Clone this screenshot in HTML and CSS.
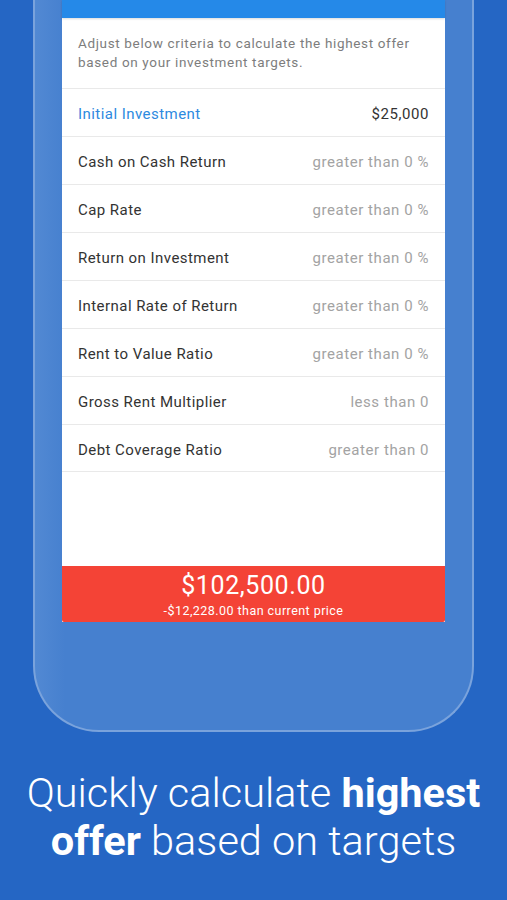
FILE: index.html
```html
<!DOCTYPE html>
<html lang="en">
<head>
  <meta charset="UTF-8" />
  <meta name="viewport" content="width=device-width, initial-scale=1.0"/>
  <title>Highest Offer</title>
  <link rel="stylesheet" href="styles.css">
</head>
<body>
  <div class="phone">
    <div class="screen">
      <div class="topbar"></div>
      <div class="content">
        <p class="intro">Adjust below criteria to calculate the highest offer based on your investment targets.</p>
        <div class="row">
          <span class="label blue">Initial Investment</span>
          <span class="value dark">$25,000</span>
        </div>
        <div class="row">
          <span class="label">Cash on Cash Return</span>
          <span class="value">greater than 0 %</span>
        </div>
        <div class="row">
          <span class="label">Cap Rate</span>
          <span class="value">greater than 0 %</span>
        </div>
        <div class="row">
          <span class="label">Return on Investment</span>
          <span class="value">greater than 0 %</span>
        </div>
        <div class="row">
          <span class="label">Internal Rate of Return</span>
          <span class="value">greater than 0 %</span>
        </div>
        <div class="row">
          <span class="label">Rent to Value Ratio</span>
          <span class="value">greater than 0 %</span>
        </div>
        <div class="row">
          <span class="label">Gross Rent Multiplier</span>
          <span class="value">less than 0</span>
        </div>
        <div class="row last">
          <span class="label">Debt Coverage Ratio</span>
          <span class="value">greater than 0</span>
        </div>
      </div>
      <div class="result">
        <div class="price">$102,500.00</div>
        <div class="diff">-$12,228.00 than current price</div>
      </div>
    </div>
  </div>
  <h1 class="caption">Quickly calculate <b>highest</b><br><b>offer</b> based on targets</h1>
</body>
</html>
```

FILE: styles.css
```css
body {
  margin: 0;
  width: 507px;
  height: 900px;
  overflow: hidden;
  background-color: #2566c4;
  font-family: Roboto, 'Noto Sans', sans-serif;
}
.phone {
  box-sizing: border-box;
  width: 441px;
  height: 732px;
  margin-left: 33px;
  padding: 0 27px;
  background: linear-gradient(90deg, #5289d3 0px, #4680cf 30px, #4680cf 100%);
  border: 2px solid #7aa3dc;
  border-top: none;
  border-radius: 0 0 66px 66px;
}
.screen {
  width: 383px;
  background: #fff;
  display: flex;
  flex-direction: column;
  height: 622px;
}
.topbar {
  height: 18px;
  background: #2589e8;
  box-shadow: 0 1px 2px rgba(0,0,0,0.15);
}
.content {
  flex: 1;
}
.intro {
  margin: 0;
  padding: 16px 16px 16px;
  font-size: 13.5px;
  line-height: 19px;
  letter-spacing: 0.65px;
  color: #7d7d7d;
}
.row {
  box-sizing: border-box;
  height: 48px;
  padding: 3px 16px 0;
  border-top: 1px solid #e9e9e9;
  display: flex;
  align-items: center;
  justify-content: space-between;
  font-size: 15px;
  letter-spacing: 0.45px;
}
.row.last {
  border-bottom: 1px solid #e9e9e9;
}
.label {
  color: #333;
}
.value {
  color: #a3a3a3;
  letter-spacing: 0.55px;
}
.blue {
  color: #2d8ae0;
}
.dark {
  color: #333;
}
.result {
  height: 56px;
  background: #f44336;
  color: #fff;
  text-align: center;
  border-radius: 0 0 2px 2px;
}
.price {
  font-size: 25px;
  line-height: 29px;
  padding-top: 5px;
  letter-spacing: 0.6px;
}
.diff {
  margin-top: 2px;
  font-size: 12.5px;
  line-height: 18px;
  letter-spacing: 0.45px;
}
.caption {
  margin: 0;
  padding-top: 37px;
  text-align: center;
  color: #fff;
  font-size: 41.5px;
  line-height: 48px;
  font-weight: 300;
}
.caption b {
  font-weight: 700;
}
```
